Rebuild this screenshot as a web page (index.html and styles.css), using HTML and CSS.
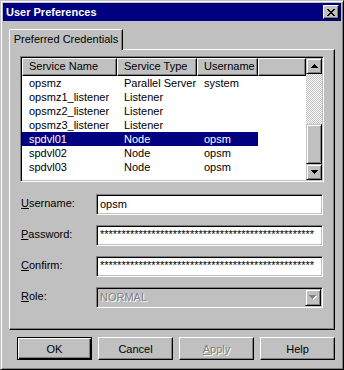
FILE: index.html
```html
<!DOCTYPE html>
<html>
<head>
    <link rel="stylesheet" href="styles.css">
</head>
<body>
    <!-- The dialog window -->
    <div class="window">
        <div class="titlebar">
            <span class="title">User Preferences</span>
            <button class="close-button">
                <svg width="8" height="7" viewBox="0 0 8 7" shape-rendering="crispEdges"><path d="M0 0h2v1H0zM6 0h2v1H6zM1 1h2v1H1zM5 1h2v1H5zM2 2h4v1H2zM3 3h2v1H3zM2 4h4v1H2zM1 5h2v1H1zM5 5h2v1H5zM0 6h2v1H0zM6 6h2v1H6z" fill="#000"/></svg>
            </button>
        </div>

        <div class="client">
            <div class="tabs">
                <div class="tab">Preferred Credentials</div>
            </div>

            <div class="panel">
                <!-- Credentials list -->
                <div class="list">
                    <div class="list-body">
                        <div class="list-head">
                            <div class="head-cell">Service Name</div>
                            <div class="head-cell">Service Type</div>
                            <div class="head-cell">Username</div>
                            <div class="head-cell"></div>
                        </div>
                        <div class="row"><span>opsmz</span><span>Parallel Server</span><span>system</span></div>
                        <div class="row"><span>opsmz1_listener</span><span>Listener</span><span></span></div>
                        <div class="row"><span>opsmz2_listener</span><span>Listener</span><span></span></div>
                        <div class="row"><span>opsmz3_listener</span><span>Listener</span><span></span></div>
                        <div class="row selected"><span>spdvl01</span><span>Node</span><span>opsm</span></div>
                        <div class="row"><span>spdvl02</span><span>Node</span><span>opsm</span></div>
                        <div class="row"><span>spdvl03</span><span>Node</span><span>opsm</span></div>
                    </div>
                    <div class="scrollbar">
                        <div class="scroll-button">
                            <svg width="7" height="4" viewBox="0 0 7 4" shape-rendering="crispEdges"><path d="M3 0h1v1H3zM2 1h3v1H2zM1 2h5v1H1zM0 3h7v1H0z" fill="#000"/></svg>
                        </div>
                        <div class="scroll-track"></div>
                        <div class="scroll-thumb"></div>
                        <div class="scroll-button">
                            <svg width="7" height="4" viewBox="0 0 7 4" shape-rendering="crispEdges"><path d="M0 0h7v1H0zM1 1h5v1H1zM2 2h3v1H2zM3 3h1v1H3z" fill="#000"/></svg>
                        </div>
                    </div>
                </div>

                <!-- Selected credential -->
                <div class="form">
                    <label class="field-label"><u>U</u>sername:</label>
                    <div class="field">opsm</div>

                    <label class="field-label"><u>P</u>assword:</label>
                    <div class="field secret">**************************************************</div>

                    <label class="field-label"><u>C</u>onfirm:</label>
                    <div class="field secret">**************************************************</div>

                    <label class="field-label"><u>R</u>ole:</label>
                    <div class="field combo">
                        <span class="combo-text">NORMAL</span>
                        <span class="combo-button">
                            <svg width="8" height="5" viewBox="0 0 8 5" shape-rendering="crispEdges"><path d="M1 1h7v1H1zM2 2h5v1H2zM3 3h3v1H3zM4 4h1v1H4z" fill="#fff"/><path d="M0 0h7v1H0zM1 1h5v1H1zM2 2h3v1H2zM3 3h1v1H3z" fill="#808080"/></svg>
                        </span>
                    </div>
                </div>
            </div>

            <div class="buttons">
                <button class="push-button default">OK</button>
                <button class="push-button">Cancel</button>
                <button class="push-button disabled"><u>A</u>pply</button>
                <button class="push-button">Help</button>
            </div>
        </div>
    </div>
</body>
</html>
```

FILE: styles.css
```css
/* Plain old dialog look */
body {
    margin: 0;
    background-color: #c0c0c0;
    font-family: "Liberation Sans", Arial, sans-serif;
    font-size: 11px;
    color: #000;
}

.window {
    width: 344px;
    height: 370px;
    box-sizing: border-box;
    border: 1px solid;
    border-color: #c0c0c0 #000 #000 #c0c0c0;
    box-shadow: inset 1px 1px #fff, inset -1px -1px #808080;
    padding: 2px;
    background-color: #c0c0c0;
}

/* Title bar */
.titlebar {
    height: 18px;
    background-color: #000080;
    display: flex;
    align-items: center;
    justify-content: space-between;
    padding: 0 2px 0 3px;
}

.title {
    color: #fff;
    font-weight: bold;
    font-size: 11px;
}

.close-button {
    width: 16px;
    height: 14px;
    padding: 0;
    margin: 0;
    box-sizing: border-box;
    background-color: #c0c0c0;
    border: 1px solid;
    border-color: #fff #000 #000 #fff;
    box-shadow: inset -1px -1px #808080;
    display: flex;
    align-items: center;
    justify-content: center;
}

/* Tab page */
.client {
    padding: 8px 6px 0 6px;
}

.tabs {
    display: flex;
}

.tab {
    position: relative;
    z-index: 1;
    width: 114px;
    height: 21px;
    box-sizing: border-box;
    margin-bottom: -1px;
    border: 1px solid;
    border-color: #fff #000 transparent #fff;
    border-bottom: none;
    border-top-left-radius: 2px;
    box-shadow: inset -1px 0 #808080;
    background-color: #c0c0c0;
    line-height: 19px;
    text-align: center;
}

.panel {
    height: 281px;
    box-sizing: border-box;
    border: 1px solid;
    border-color: #fff #000 #000 #fff;
    box-shadow: inset -1px -1px #808080;
    padding: 6px 10px 0 10px;
}

/* List view */
.list {
    height: 126px;
    box-sizing: border-box;
    border: 1px solid;
    border-color: #808080 #fff #fff #808080;
    box-shadow: inset 1px 1px #000, inset -1px -1px #c0c0c0;
    padding: 1px;
    background-color: #fff;
    display: flex;
}

.list-body {
    flex: 1;
    overflow: hidden;
}

.list-head {
    display: grid;
    grid-template-columns: 95px 80px 61px 1fr;
    height: 18px;
}

.head-cell {
    box-sizing: border-box;
    background-color: #c0c0c0;
    border: 1px solid;
    border-color: #fff #000 #000 #fff;
    box-shadow: inset -1px -1px #808080;
    padding-left: 6px;
    line-height: 15px;
    white-space: nowrap;
    overflow: hidden;
}

.row {
    display: grid;
    grid-template-columns: 95px 80px 61px;
    width: 236px;
    height: 14px;
    line-height: 14px;
}

.row span {
    padding-left: 7px;
    white-space: nowrap;
    overflow: hidden;
}

.row.selected {
    background-color: #000080;
    color: #fff;
}

/* Scroll bar */
.scrollbar {
    width: 16px;
    display: flex;
    flex-direction: column;
}

.scroll-button,
.scroll-thumb {
    box-sizing: border-box;
    background-color: #c0c0c0;
    border: 1px solid;
    border-color: #c0c0c0 #000 #000 #c0c0c0;
    box-shadow: inset 1px 1px #fff, inset -1px -1px #808080;
}

.scroll-button {
    height: 16px;
    display: flex;
    align-items: center;
    justify-content: center;
}

.scroll-track {
    flex: 1;
    background: repeating-conic-gradient(#fff 0 25%, #c0c0c0 0 50%) 0 0 / 2px 2px;
}

.scroll-thumb {
    height: 40px;
}

/* Fields under the list */
.form {
    margin-top: 12px;
    display: grid;
    grid-template-columns: 76px 227px;
    row-gap: 10px;
    align-items: center;
}

.field-label {
    padding-left: 1px;
    margin-top: -3px;
}

.field {
    height: 21px;
    box-sizing: border-box;
    border: 1px solid;
    border-color: #808080 #fff #fff #808080;
    box-shadow: inset 1px 1px #000, inset -1px -1px #c0c0c0;
    background-color: #fff;
    padding-left: 3px;
    line-height: 18px;
    white-space: nowrap;
    overflow: hidden;
}

.field.secret {
    padding-right: 3px;
    line-height: 17px;
}

.field.combo {
    display: flex;
    background-color: #c0c0c0;
    padding: 1px;
}

.combo-text {
    flex: 1;
    padding-left: 2px;
    line-height: 17px;
    color: #808080;
    text-shadow: 1px 1px #fff;
}

.combo-button {
    width: 16px;
    height: 17px;
    box-sizing: border-box;
    border: 1px solid;
    border-color: #c0c0c0 #000 #000 #c0c0c0;
    box-shadow: inset 1px 1px #fff, inset -1px -1px #808080;
    display: flex;
    align-items: center;
    justify-content: center;
}

/* Dialog buttons */
.buttons {
    margin-top: 7px;
    display: flex;
    justify-content: flex-end;
    gap: 6px;
}

.push-button {
    width: 75px;
    height: 23px;
    margin: 0;
    padding: 0;
    box-sizing: border-box;
    font-family: "Liberation Sans", Arial, sans-serif;
    font-size: 11px;
    color: #000;
    background-color: #c0c0c0;
    border: 1px solid;
    border-color: #fff #000 #000 #fff;
    box-shadow: inset -1px -1px #808080;
}

.push-button.default {
    border-color: #000;
    box-shadow: inset 1px 1px #fff, inset -1px -1px #000, inset -2px -2px #808080;
}

.push-button.disabled {
    color: #808080;
    text-shadow: 1px 1px #fff;
}
```
